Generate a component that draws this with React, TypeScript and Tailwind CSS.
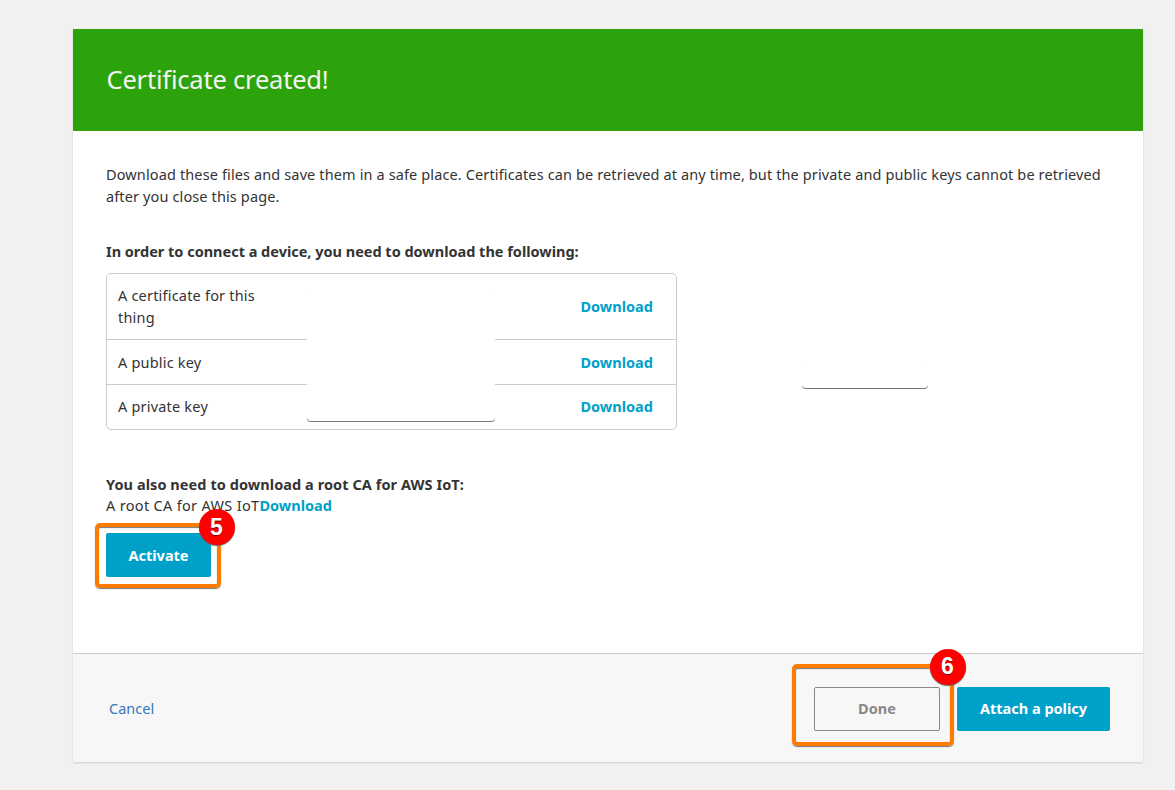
import type { ReactNode } from "react";

const files = [
  { label: ["A certificate for this", "thing"], height: "h-[65px] pb-[2px]" },
  { label: ["A public key"], height: "h-[45px] border-t border-[#ccc]" },
  { label: ["A private key"], height: "h-[45px] border-t border-[#ccc] pb-[2px]" },
];

function Download() {
  return (
    <a href="#" className="font-bold tracking-[0.02px] text-[#00a1c9]">
      Download
    </a>
  );
}

function Highlight({ step, className, badge }: { step: number; className: string; badge: string }) {
  return (
    <span
      className={`pointer-events-none absolute rounded-[5px] border-4 border-[#ff7b00] shadow-[0_1px_1px_#777,inset_0_1px_1px_#777] ${className}`}
    >
      <span
        className={`absolute flex size-9 items-center justify-center rounded-full bg-[#fe0000] font-['Liberation_Sans',sans-serif] text-[23px] leading-none font-bold text-white shadow-[0_1px_1px_#666] [text-shadow:0_1px_1px_#700] ${badge}`}
      >
        {step}
      </span>
    </span>
  );
}

function Line({ children, className = "" }: { children: ReactNode; className?: string }) {
  return <span className={`block whitespace-nowrap ${className}`}>{children}</span>;
}

export default function App() {
  return (
    <div className="h-[790px] overflow-hidden bg-[#f1f1f1] pt-[29px] pl-[73px] font-['Noto_Sans',sans-serif] text-[14.5px] leading-[22px] text-[#333]">
      <main className="flex h-[733px] w-[1070px] flex-col bg-white shadow-[0_1px_2px_rgba(0,0,0,0.15)]">
        <header className="flex h-[102px] shrink-0 items-center bg-[#2ca30b] pb-[2px] pl-[33.5px]">
          <h1 className="text-[25.5px] tracking-[-0.2px] text-[#f4f4f4]">Certificate created!</h1>
        </header>
        <section className="relative flex-1 px-[33px] pt-8">
          <p>
            <Line className="tracking-[0.125px]">
              Download these files and save them in a safe place. Certificates can be retrieved at any time, but the private and public keys cannot be retrieved
            </Line>
            <Line className="tracking-[0.125px]">after you close this page.</Line>
          </p>
          <h2 className="mt-[33px] font-bold tracking-[-0.01px] whitespace-nowrap">
            In order to connect a device, you need to download the following:
          </h2>
          <div className="relative mt-[11px] w-[571px] rounded-[5px] border border-[#ccc]">
            {files.map((file) => (
              <div key={file.label[0]} className={`flex items-center justify-between pr-[23px] pl-[11px] ${file.height}`}>
                <div>
                  {file.label.map((text) => (
                    <Line key={text} className="tracking-[0.2px]">{text}</Line>
                  ))}
                </div>
                <Download />
              </div>
            ))}
            <div className="absolute top-[17px] left-[200px] h-[130px] w-[188px] rounded-[4px] bg-white shadow-[0_1px_0_#777]" />
          </div>
          <div className="absolute top-[227px] left-[729px] h-[30px] w-[126px] rounded-[4px] bg-white shadow-[0_1px_0_#777]" />
          <h2 className="mt-[43px] font-bold tracking-[0.07px] whitespace-nowrap">
            You also need to download a root CA for AWS IoT:
          </h2>
          <p className="-mt-px flex whitespace-nowrap">
            <span className="tracking-[0.32px]">A root CA for AWS IoT</span>
            <Download />
          </p>
          <div className="relative mt-[17px] w-[105px]">
            <button className="h-11 w-[105px] rounded-[2px] bg-[#00a1c9] font-bold text-white">Activate</button>
            <Highlight step={5} badge="-top-[18px] -right-[17.5px]" className="-top-[10px] -left-[11px] h-[65px] w-[126px]" />
          </div>
        </section>
        <footer className="flex h-[109px] shrink-0 items-center border-t border-[#ccc] bg-[#f7f7f7] pr-[33px] pl-9">
          <a href="#" className="mr-auto text-[#337ab7]">Cancel</a>
          <div className="relative mt-px mr-[17px]">
            <button className="h-11 w-[126px] rounded-[2px] border border-[#888] pb-px font-bold tracking-[0.02px] text-[#888]">Done</button>
            <Highlight step={6} badge="-top-[19px] -right-[15.5px]" className="-top-[23px] -left-[22px] h-[82px] w-[162px]" />
          </div>
          <button className="mt-px h-11 w-[153px] rounded-[2px] bg-[#00a1c9] pb-px font-bold whitespace-nowrap text-white">Attach a policy</button>
        </footer>
      </main>
    </div>
  );
}
